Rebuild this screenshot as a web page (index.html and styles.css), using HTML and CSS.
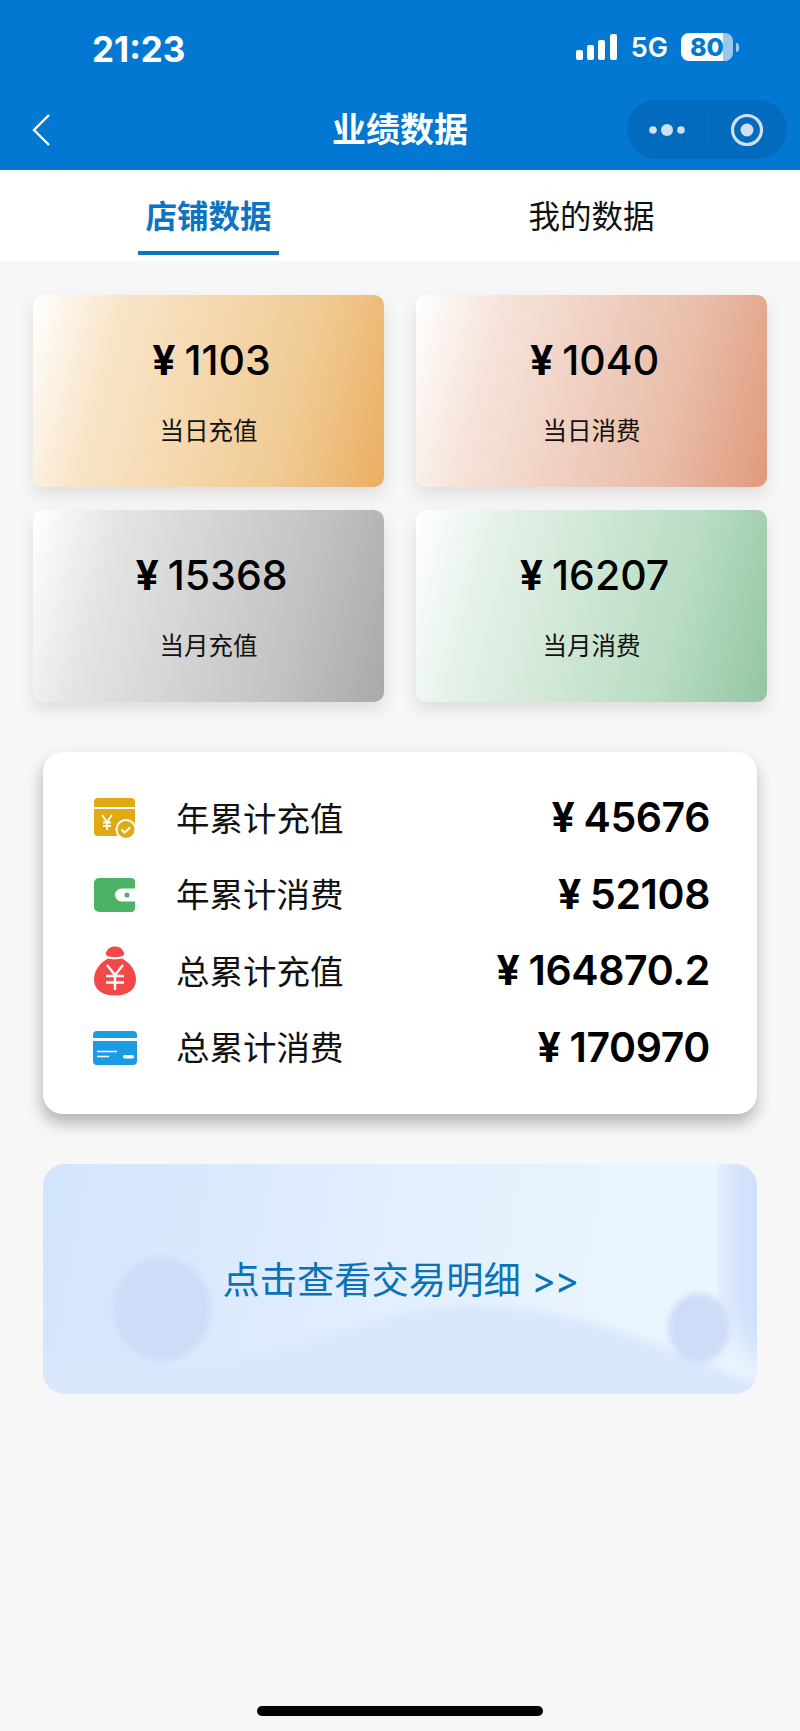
FILE: index.html
```html
<!DOCTYPE html>
<html lang="zh">
<head>
<meta charset="utf-8">
<title>业绩数据</title>
<link rel="stylesheet" href="styles.css">
</head>
<body>
<div class="page">
  <header class="header">
    <div class="status">
      <span class="time">21:23</span>
      <div class="status-right">
        <svg class="signal" width="41" height="26" viewBox="0 0 41 26"><g fill="#fff"><rect x="0" y="16" width="7" height="10" rx="2"/><rect x="11" y="11" width="7" height="15" rx="2"/><rect x="22" y="6" width="7" height="20" rx="2"/><rect x="34" y="0" width="7" height="26" rx="2"/></g></svg>
        <span class="net">5G</span>
        <div class="battery"><span class="battery-num">80</span></div>
        <span class="battery-tip"></span>
      </div>
    </div>
    <div class="nav">
      <svg class="back" width="20" height="34" viewBox="0 0 20 34"><path d="M18 2 3 17l15 15" fill="none" stroke="#fff" stroke-width="2.4"/></svg>
      <h1 class="title">业绩数据</h1>
      <div class="capsule">
        <div class="capsule-part">
          <svg width="36" height="14" viewBox="0 0 36 14"><g fill="#cfe0f0"><circle cx="4" cy="7" r="3.8"/><circle cx="18" cy="7" r="6"/><circle cx="32" cy="7" r="3.8"/></g></svg>
        </div>
        <div class="capsule-part capsule-right">
          <svg width="34" height="34" viewBox="0 0 34 34"><circle cx="17" cy="17" r="14.5" fill="none" stroke="#cfe0f0" stroke-width="3.2"/><circle cx="17" cy="17" r="6.5" fill="#cfe0f0"/></svg>
        </div>
      </div>
    </div>
  </header>

  <nav class="tabs">
    <div class="tab tab-active"><span class="tab-text">店铺数据</span></div>
    <div class="tab"><span class="tab-text">我的数据</span></div>
  </nav>

  <section class="cards">
    <div class="card card-orange"><div class="card-amount"><span class="yen">¥</span>1103</div><div class="card-label">当日充值</div></div>
    <div class="card card-salmon"><div class="card-amount"><span class="yen">¥</span>1040</div><div class="card-label">当日消费</div></div>
    <div class="card card-grey"><div class="card-amount"><span class="yen">¥</span>15368</div><div class="card-label">当月充值</div></div>
    <div class="card card-green"><div class="card-amount"><span class="yen">¥</span>16207</div><div class="card-label">当月消费</div></div>
  </section>

  <section class="panel">
    <div class="row">
      <svg class="row-icon" width="44" height="44" viewBox="0 0 44 44">
        <path d="M1 6a4 4 0 0 1 4-4h33a4 4 0 0 1 4 4v5H1z" fill="#dfaa14"/>
        <path d="M1 13h41v23a4 4 0 0 1-4 4H5a4 4 0 0 1-4-4z" fill="#dfaa14"/>
        <path d="M9 19l5 7 5-7M14 26v8M10 26.500h8M10 30h8" fill="none" stroke="#fff" stroke-width="1.800"/>
        <circle cx="33" cy="33.500" r="9.500" fill="#dfaa14" stroke="#fff" stroke-width="2"/>
        <path d="M28.500 33.500l3.200 3.200 5.500-5.500" fill="none" stroke="#fff" stroke-width="2"/>
      </svg>
      <span class="row-label">年累计充值</span>
      <span class="row-amount"><span class="yen">¥</span>45676</span>
    </div>
    <div class="row">
      <svg class="row-icon" width="44" height="44" viewBox="0 0 44 44">
        <path d="M6 5h32a4 4 0 0 1 4 4v6.500H28.500a6.500 6.500 0 0 0 0 13H42V35a4 4 0 0 1-4 4H6a5 5 0 0 1-5-5V10a5 5 0 0 1 5-5z" fill="#4bb366"/>
        <circle cx="34" cy="22" r="2.600" fill="#5fa57c"/>
      </svg>
      <span class="row-label">年累计消费</span>
      <span class="row-amount"><span class="yen">¥</span>52108</span>
    </div>
    <div class="row">
      <svg class="row-icon" width="44" height="50" viewBox="0 0 44 50">
        <path d="M16 10.500c-3-.5-4.500-4-2-5.500 1-3 4-4.500 8-4.500s7 1.500 8 4.500c2.500 1.500 1 5-2 5.500-4 1-8 1-12 0z" fill="#f24848"/>
        <path d="M15 12.500c4 1 10 1 14 0 8 4 14 12 14 21 0 10-8 16-21 16S1 43.500 1 33.500c0-9 6-17 14-21z" fill="#f24848"/>
        <path d="M14 19l8 10 8-10M13 30h18M13 36.500h18M22 29v15" fill="none" stroke="#fff" stroke-width="2.400"/>
      </svg>
      <span class="row-label">总累计充值</span>
      <span class="row-amount"><span class="yen">¥</span>164870.2</span>
    </div>
    <div class="row">
      <svg class="row-icon" width="44" height="34" viewBox="0 0 44 34">
        <path d="M0 4a4 4 0 0 1 4-4h36a4 4 0 0 1 4 4v3H0z" fill="#1a9ce4"/>
        <path d="M0 10h44v20a4 4 0 0 1-4 4H4a4 4 0 0 1-4-4z" fill="#1a9ce4"/>
        <path d="M4 20.500h20M4 25.500h12" stroke="#fff" stroke-width="1.600"/>
        <rect x="30" y="24" width="11" height="3.600" rx="1.800" fill="#fff"/>
      </svg>
      <span class="row-label">总累计消费</span>
      <span class="row-amount"><span class="yen">¥</span>170970</span>
    </div>
  </section>

  <section class="banner">
    <svg class="banner-art" width="714" height="230" viewBox="0 0 714 230" preserveAspectRatio="none">
      <defs>
        <filter id="soft"><feGaussianBlur stdDeviation="3"/></filter>
        <filter id="wave"><feGaussianBlur stdDeviation="4"/></filter>
        <filter id="softer"><feGaussianBlur stdDeviation="14"/></filter>
      </defs>
      <path d="M-10 188C40 198 80 203 125 204 220 206 320 146 416 141 500 138 570 165 640 190 670 200 700 215 724 225V240H-10z" fill="#d9e8fd" filter="url(#wave)"/>
      <path d="M682 -30H750V225C725 205 700 190 682 150z" fill="#d0e0fc" filter="url(#softer)"/>
      <ellipse cx="119" cy="145" rx="49" ry="52" fill="#cfdcf8" filter="url(#soft)"/>
      <ellipse cx="656" cy="164" rx="31" ry="35" fill="#cfdcf8" filter="url(#soft)"/>
    </svg>
    <span class="banner-text">点击查看交易明细 <span class="banner-arrows">&gt;&gt;</span></span>
  </section>

  <div class="home-wrap"><div class="home-bar"></div></div>
</div>
</body>
</html>
```
FILE: styles.css
```css
* { box-sizing: border-box; }
html, body { margin: 0; padding: 0; }
body {
  width: 800px;
  height: 1731px;
  overflow: hidden;
  background: #f7f7f7;
  font-family: Inter, Roboto, "Noto Sans CJK SC", "Noto Sans", sans-serif;
  color: #000;
}
.page { display: flex; flex-direction: column; height: 1731px; }

.header { height: 170px; background: #0278d2; color: #fff; display: flex; flex-direction: column; }
.status { height: 96px; display: flex; justify-content: space-between; align-items: center; padding: 0 61px 0 92px; }
.time { font-size: 35px; font-weight: 700; margin-top: 1px; }
.status-right { display: flex; align-items: center; margin-top: -2px; }
.signal { margin-right: 14px; }
.net { font-size: 27px; font-weight: 600; margin-right: 13px; line-height: 1; }
.battery {
  width: 52px; height: 28px; border-radius: 8px;
  background: linear-gradient(90deg, #fff 0 81%, #9cc6ea 81% 100%);
  color: #0278d2; display: flex; align-items: center; padding-left: 9px;
}
.battery-num { font-size: 25px; font-weight: 800; line-height: 1; }
.battery-tip { width: 3px; height: 9px; margin-left: 3px; background: #9cc6ea; border-radius: 0 3px 3px 0; }

.nav { height: 74px; display: flex; align-items: center; position: relative; padding: 0 13px 7px 31px; justify-content: space-between; }
.back { display: block; }
.title {
  position: absolute; left: 0; right: 0; top: 0; height: 63px; margin: 0;
  display: flex; align-items: center; justify-content: center;
  font-size: 34px; font-weight: 700; color: #fff;
}
.capsule { width: 160px; height: 59px; border-radius: 30px; background: #026bbd; display: flex; align-items: center; }
.capsule-part { flex: 1; display: flex; align-items: center; justify-content: center; height: 40px; }
.capsule-right { border-left: 1px solid #0a72c6; }

.tabs { height: 91px; background: #fff; display: grid; grid-template-columns: 1fr 1fr; column-gap: 32px; padding: 0 33px; }
.tab { display: flex; justify-content: center; }
.tab-text { font-size: 31.500px; height: 85px; line-height: 94px; color: #111; width: 141px; white-space: nowrap; text-align: center; }
.tab-active .tab-text { color: #0c74c0; font-weight: 700; border-bottom: 4px solid #0c74c0; }

.cards { display: grid; grid-template-columns: 351px 351px; column-gap: 32px; row-gap: 23.500px; padding: 34px 33px 0; }
.card { height: 191.500px; border-radius: 10px; box-shadow: 0 8px 16px rgba(60, 60, 60, .13); display: flex; flex-direction: column; align-items: center; padding-top: 39px; }
.card-amount { font-size: 41px; font-weight: 500; line-height: 52px; padding-left: 6px; }
.card-amount .yen { margin-right: 9px; font-weight: 700; }
.card-label { font-size: 24.500px; line-height: 34px; margin-top: 28px; color: #111; }
.card-orange { background: linear-gradient(105deg, #fff 0%, #f9e5c9 22%, #f0cb94 72%, #ebae62 100%); }
.card-salmon { background: linear-gradient(105deg, #fff 0%, #f6e3da 22%, #e9bda9 72%, #e09a7c 100%); }
.card-grey { background: linear-gradient(105deg, #fff 0%, #e4e4e4 22%, #c3c3c3 72%, #a9a9a9 100%); }
.card-green { background: linear-gradient(105deg, #fff 0%, #e4f1e8 22%, #b9dcc3 72%, #93c6a0 100%); }

.panel { margin: 50.500px 43px 0; height: 362px; border-radius: 20px; background: #fff; box-shadow: -1px 9px 16px rgba(0, 0, 0, .28); display: flex; flex-direction: column; justify-content: center; padding: 0 47px 0 50px; }
.row { height: 76.500px; display: flex; align-items: center; }
.row-icon { flex: none; margin-right: 39px; }
.row-label { font-size: 33.500px; color: #111; flex: 1; padding-bottom: 4px; }
.row-amount { font-size: 41px; font-weight: 600; letter-spacing: -.4px; padding-bottom: 2px; }
.row-amount .yen { margin-right: 9px; font-weight: 700; }

.banner { margin: 50px 43px 0; height: 230px; border-radius: 22px; background: linear-gradient(100deg, #d3e4fd 0%, #e6f1fe 60%, #ebf5ff 85%); position: relative; overflow: hidden; display: flex; align-items: center; justify-content: center; }
.banner-art { position: absolute; left: 0; top: 0; }
.banner-text { position: relative; font-size: 37.300px; color: #0a72b8; margin-top: -2px; white-space: nowrap; }
.banner-arrows { letter-spacing: -1.500px; }

.home-wrap { margin-top: auto; padding-bottom: 15px; display: flex; justify-content: center; }
.home-bar { width: 286px; height: 10px; border-radius: 5px; background: #000; }
```
